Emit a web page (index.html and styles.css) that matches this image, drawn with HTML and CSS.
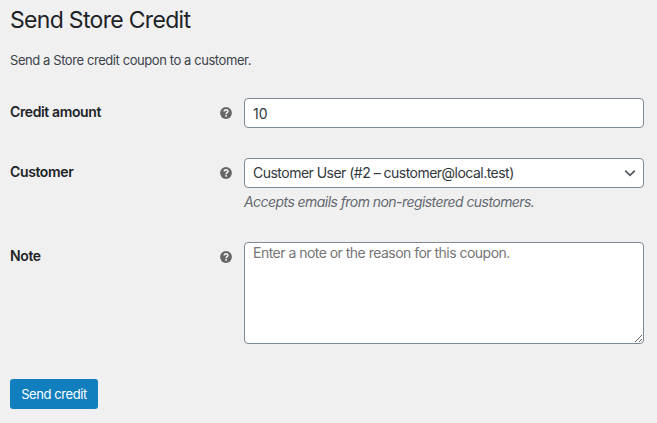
FILE: index.html
```html
<!DOCTYPE html>
<html lang="en">
<head>
<meta charset="utf-8">
<title>Send Store Credit</title>
<link rel="stylesheet" href="styles.css">
</head>
<body>
<main class="page">
<h1 class="title">Send Store Credit</h1>
<p class="intro">Send a Store credit coupon to a customer.</p>
<form class="form">
<div class="row row-amount">
<label class="label" for="amount">Credit amount</label>
<svg class="help" viewBox="0 0 12 12"><circle cx="6" cy="6" r="5.9" fill="#666"/><path d="M4.2 4.6C4.2 2.3 7.9 2.3 7.9 4.4C7.9 5.8 6.1 5.6 6.1 7.2M6.1 8.1V9.7" fill="none" stroke="#f0f0f1" stroke-width="1.6"/></svg>
<input class="control amount" id="amount" type="text" value="10">
</div>
<div class="row row-customer">
<label class="label">Customer</label>
<svg class="help" viewBox="0 0 12 12"><circle cx="6" cy="6" r="5.9" fill="#666"/><path d="M4.2 4.6C4.2 2.3 7.9 2.3 7.9 4.4C7.9 5.8 6.1 5.6 6.1 7.2M6.1 8.1V9.7" fill="none" stroke="#f0f0f1" stroke-width="1.6"/></svg>
<div class="field">
<div class="control select"><span class="value">Customer User (#2 – customer@local.test)</span><svg class="chevron" viewBox="0 0 12 8"><path d="M1.2 1.6L6 6.4L10.8 1.6" fill="none" stroke="#50575e" stroke-width="1.7"/></svg></div>
<p class="hint">Accepts emails from non-registered customers.</p>
</div>
</div>
<div class="row row-note">
<label class="label" for="note">Note</label>
<svg class="help" viewBox="0 0 12 12"><circle cx="6" cy="6" r="5.9" fill="#666"/><path d="M4.2 4.6C4.2 2.3 7.9 2.3 7.9 4.4C7.9 5.8 6.1 5.6 6.1 7.2M6.1 8.1V9.7" fill="none" stroke="#f0f0f1" stroke-width="1.6"/></svg>
<textarea class="control note" id="note" placeholder="Enter a note or the reason for this coupon."></textarea>
</div>
<button class="submit" type="button">Send credit</button>
</form>
</main>
</body>
</html>
```
FILE: styles.css
```css
* { box-sizing: border-box; }
body { margin: 0; background: #f0f0f1; color: #3c434a; font-family: Inter, sans-serif; font-size: 13px; }
.page { padding: 5px 13px 0 10px; }
.title { margin: 0; font-size: 23px; font-weight: 400; line-height: 30px; color: #1d2327; letter-spacing: -0.69px; }
.intro { margin: 15px 0 0; line-height: 20px; font-size: 13px; letter-spacing: -0.42px; }
.form { margin-top: 28px; }
.row { display: grid; grid-template-columns: 210px 12px 400px; column-gap: 0; align-items: start; }
.row > :last-child { margin-left: 12px; width: 400px; }
.row-amount { height: 60px; }
.row-customer { height: 84px; }
.row-note { height: 137px; }
.label { font-size: 14px; font-weight: 600; line-height: 18px; padding-top: 5px; color: #1d2327; letter-spacing: -0.38px; }
.help { width: 12px; height: 12px; margin: 8.5px 0 0 0.4px; }
.control { display: block; height: 30px; margin: 0; padding: 0 8px; border: 1px solid #7e8993; border-radius: 4px; background: #fff; color: #32373c; font: 14px/28px Inter, sans-serif; letter-spacing: -0.52px; }
.amount { letter-spacing: 0; }
.select { display: flex; justify-content: space-between; align-items: center; padding-right: 7px; }
.chevron { width: 12px; height: 8px; }
.hint { margin: 3px 0 0; font-size: 14px; font-style: italic; line-height: 21px; color: #646970; letter-spacing: -0.56px; }
.note { height: 102px; padding: 0 8px; line-height: 20px; resize: vertical; }
.note::placeholder { color: #757575; }
.submit { display: block; width: 88px; height: 30px; padding: 0; border: 0; border-radius: 3px; background: #117ebd; color: #fff; font: 13px/30px Inter, sans-serif; letter-spacing: -0.42px; }
```
